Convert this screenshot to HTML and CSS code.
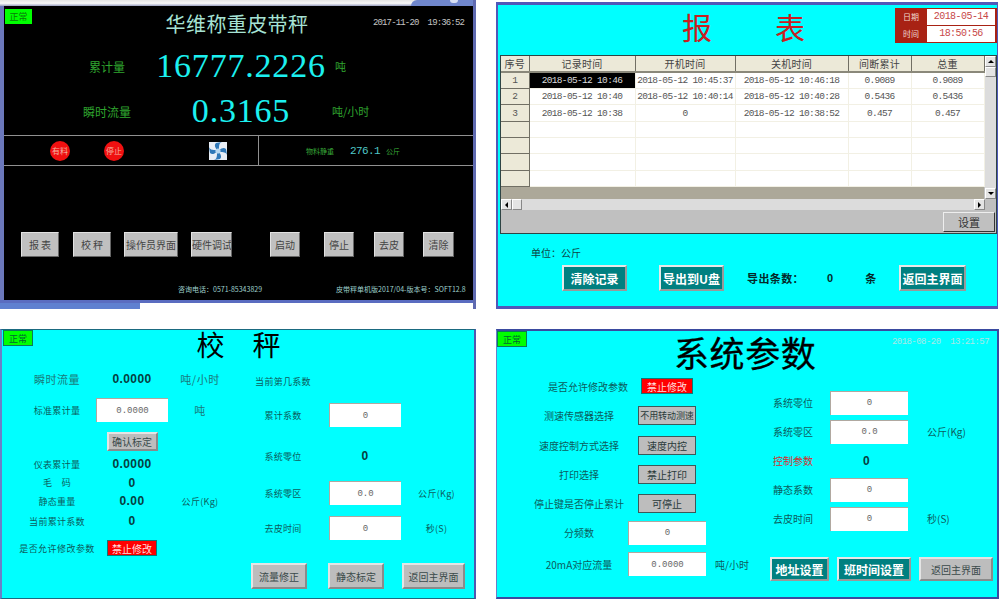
FILE: index.html
```html
<!DOCTYPE html>
<html lang="zh-CN">
<head>
<meta charset="utf-8">
<title>华维称重皮带秤</title>
<link rel="stylesheet" href="styles.css">
</head>
<body>
<main class="sheet">

  <!-- Main operating screen -->
  <section class="cell">
    <div class="win-main">
      <div class="chrome-top"><span class="chrome-corner"><i class="chrome-close"></i></span></div>
      <div class="screen-black">
        <header class="main-head">
          <span class="badge">正常</span>
          <h1 class="main-title">华维称重皮带秤</h1>
          <span class="main-clock">2017-11-20&nbsp; 19:36:52</span>
        </header>
        <div class="metrics">
          <span class="metric-label">累计量</span><span class="metric-value">16777.2226</span><span class="metric-unit unit-ton">吨</span>
          <span class="metric-label">瞬时流量</span><span class="metric-value">0.3165</span><span class="metric-unit">吨/小时</span>
        </div>
        <div class="status-strip">
          <div class="status-left">
            <span class="lamp">有料</span>
            <span class="lamp lamp-second">停止</span>
            <svg class="fan" viewBox="0 0 18 18" aria-hidden="true">
              <rect width="18" height="18" fill="#e8eef6"/>
              <path d="M8 8C6 5 5 3 7 1l6-1c-3 1-3 4-3 7z" fill="#2f78b8"/>
              <path d="M10 8c3-2 5-3 7-1l1 6c-1-3-4-3-7-3z" fill="#2f78b8"/>
              <path d="M10 10c2 3 3 5 1 7l-6 1c3-1 3-4 3-7z" fill="#2f78b8"/>
              <path d="M8 10c-3 2-5 3-7 1L0 5c1 3 4 3 7 3z" fill="#2f78b8"/>
              <circle cx="9" cy="9" r="2.6" fill="#b8d8f0"/>
            </svg>
          </div>
          <div class="status-right">
            <span class="tiny-green">物料静重</span>
            <span class="static-weight">276.1</span>
            <span class="tiny-green">公斤</span>
          </div>
        </div>
        <nav class="main-buttons">
          <button class="btn btn-main w38">报 表</button>
          <button class="btn btn-main w38 ml14">校 秤</button>
          <button class="btn btn-main w54 ml13">操作员界面</button>
          <button class="btn btn-main w41 ml13">硬件调试</button>
          <button class="btn btn-main w30 ml38">启动</button>
          <button class="btn btn-main w30 ml24">停止</button>
          <button class="btn btn-main w30 ml20">去皮</button>
          <button class="btn btn-main w31 ml19">清除</button>
        </nav>
        <footer class="main-foot">
          <span class="foot-phone">咨询电话：0571-85343829</span>
          <span class="foot-version">皮带秤单机版2017/04-版本号：SOFT12.8</span>
        </footer>
      </div>
      <div class="chrome-bottom"><span class="chrome-tab"></span></div>
    </div>
  </section>

  <!-- Report screen -->
  <section class="cell">
    <div class="screen report">
      <header class="report-head">
        <h1 class="report-title"><span>报</span><span>表</span></h1>
        <div class="clock-box">
          <span class="clock-label">日期</span><span class="clock-value">2018-05-14</span>
          <span class="clock-label">时间</span><span class="clock-value">18:50:56</span>
        </div>
      </header>
      <div class="grid-frame">
        <div class="grid-top">
          <div class="grid-main">
            <table class="records">
              <colgroup>
                <col class="col-no"><col class="col-rec"><col class="col-on"><col class="col-off"><col class="col-sub"><col class="col-total">
              </colgroup>
              <thead>
                <tr><th>序号</th><th>记录时间</th><th>开机时间</th><th>关机时间</th><th>间断累计</th><th>总重</th></tr>
              </thead>
              <tbody>
                <tr><th>1</th><td class="selected">2018-05-12 10:46</td><td>2018-05-12 10:45:37</td><td>2018-05-12 10:46:18</td><td>0.9089</td><td>0.9089</td></tr>
                <tr><th>2</th><td>2018-05-12 10:40</td><td>2018-05-12 10:40:14</td><td>2018-05-12 10:40:28</td><td>0.5436</td><td>0.5436</td></tr>
                <tr><th>3</th><td>2018-05-12 10:38</td><td>0</td><td>2018-05-12 10:38:52</td><td>0.457</td><td>0.457</td></tr>
                <tr><th></th><td></td><td></td><td></td><td></td><td></td></tr>
                <tr><th></th><td></td><td></td><td></td><td></td><td></td></tr>
                <tr><th></th><td></td><td></td><td></td><td></td><td></td></tr>
                <tr><th></th><td></td><td></td><td></td><td></td><td></td></tr>
              </tbody>
            </table>
            <div class="grid-empty"></div>
          </div>
          <div class="vscroll">
            <span class="sb-btn"><i class="tri tri-up"></i></span>
            <span class="sb-thumb"></span>
            <span class="sb-fill"></span>
            <span class="sb-btn"><i class="tri tri-down"></i></span>
          </div>
        </div>
        <div class="hscroll">
          <span class="sb-btn-h"><i class="tri tri-left"></i></span>
          <span class="sb-thumb-h"></span>
          <span class="sb-fill"></span>
          <span class="sb-btn-h"><i class="tri tri-right"></i></span>
        </div>
        <div class="grid-actions"><button class="btn btn-set">设置</button></div>
      </div>
      <p class="report-unit">单位：公斤</p>
      <div class="report-actions">
        <button class="btn btn-teal w65">清除记录</button>
        <button class="btn btn-teal w65 ml32">导出到U盘</button>
        <span class="export-label">导出条数：</span>
        <span class="export-count">0</span>
        <span class="export-unit">条</span>
        <button class="btn btn-teal w67 ml22">返回主界面</button>
      </div>
    </div>
  </section>

  <!-- Calibration screen -->
  <section class="cell cell-low">
    <div class="screen calib">
      <header class="calib-head">
        <span class="badge badge-light">正常</span>
        <h1 class="calib-title"><span>校</span><span>秤</span></h1>
      </header>
      <div class="calib-body">
        <div class="form calib-left">
          <span class="lbl lbl-lg">瞬时流量</span><b class="val">0.0000</b><span class="unit unit-lg">吨/小时</span>
          <span class="lbl">标准累计量</span><span class="input">0.0000</span><span class="unit unit-lg">吨</span>
          <span></span><button class="btn btn-form btn-short w51">确认标定</button><span></span>
          <span class="lbl">仪表累计量</span><b class="val">0.0000</b><span></span>
          <span class="lbl">毛　码</span><b class="val">0</b><span></span>
          <span class="lbl">静态重量</span><b class="val">0.00</b><span class="unit">公斤(Kg)</span>
          <span class="lbl">当前累计系数</span><b class="val">0</b><span></span>
          <span class="lbl lbl-wide">是否允许修改参数</span><span class="alarm w50">禁止修改</span><span></span>
        </div>
        <div class="calib-side">
          <div class="form calib-right">
            <span class="lbl">当前第几系数</span><span></span><span></span>
            <span class="lbl">累计系数</span><span class="input">0</span><span></span>
            <span class="lbl">系统零位</span><b class="val">0</b><span></span>
            <span class="lbl">系统零区</span><span class="input">0.0</span><span class="unit">公斤(Kg)</span>
            <span class="lbl">去皮时间</span><span class="input">0</span><span class="unit">秒(S)</span>
          </div>
          <div class="calib-buttons">
            <button class="btn btn-form w56">流量修正</button>
            <button class="btn btn-form w56 ml21">静态标定</button>
            <button class="btn btn-form w63 ml18">返回主界面</button>
          </div>
        </div>
      </div>
    </div>
  </section>

  <!-- System parameter screen -->
  <section class="cell cell-low">
    <div class="screen params">
      <header class="params-head">
        <span class="badge badge-light">正常</span>
        <h1 class="params-title">系统参数</h1>
        <span class="params-clock">2018-08-20&nbsp; 13:21:57</span>
      </header>
      <div class="params-body">
        <div class="form params-left">
          <span class="lbl lbl-p lbl-shift">是否允许修改参数</span><span class="alarm w52">禁止修改</span><span></span>
          <span class="lbl lbl-p">测速传感器选择</span><span class="toggle toggle-small">不用转动测速</span><span></span>
          <span class="lbl lbl-p">速度控制方式选择</span><span class="toggle">速度内控</span><span></span>
          <span class="lbl lbl-p">打印选择</span><span class="toggle">禁止打印</span><span></span>
          <span class="lbl lbl-p">停止键是否停止累计</span><span class="toggle">可停止</span><span></span>
          <span class="lbl lbl-p">分频数</span><span class="input input-wide">0</span><span></span>
          <span class="lbl lbl-p">20mA对应流量</span><span class="input input-wide">0.0000</span><span class="unit lbl-p">吨/小时</span>
        </div>
        <div class="params-side">
          <div class="form params-right">
            <span class="lbl lbl-p">系统零位</span><span class="input input-wide">0</span><span></span>
            <span class="lbl lbl-p">系统零区</span><span class="input input-wide">0.0</span><span class="unit unit-start lbl-p">公斤(Kg)</span>
            <span class="lbl lbl-p lbl-red">控制参数</span><b class="val val-left">0</b><span></span>
            <span class="lbl lbl-p">静态系数</span><span class="input input-wide">0</span><span></span>
            <span class="lbl lbl-p">去皮时间</span><span class="input input-wide">0</span><span class="unit unit-start lbl-p">秒(S)</span>
          </div>
          <div class="params-buttons">
            <button class="btn btn-teal btn-low w59">地址设置</button>
            <button class="btn btn-teal btn-low w74 ml8">班时间设置</button>
            <button class="btn btn-form btn-low w74 ml8">返回主界面</button>
          </div>
        </div>
      </div>
    </div>
  </section>

</main>
</body>
</html>
```
FILE: styles.css
```css
* { box-sizing: border-box; }

html, body { margin: 0; height: 100%; background: #fff; overflow: hidden; }

body {
  font-family: "Noto Sans CJK SC", "Liberation Sans", sans-serif;
  color: #0c5c5c;
}

h1, p { margin: 0; font-weight: 400; }

.sheet {
  display: grid;
  grid-template-columns: 496px 504px;
  grid-template-rows: 329px 271px;
  width: 1000px;
  height: 600px;
}

.cell { min-width: 0; }

/* Shared widgets */
.badge {
  display: flex;
  align-items: center;
  justify-content: center;
  width: 27px;
  height: 15px;
  background: #0f0;
  color: #0a5a0a;
  font-size: 9px;
}
.badge-light { width: 30px; height: 16px; border: 1px solid #0a7a5a; color: #063; }

.btn {
  display: block;
  padding: 0;
  font-family: inherit;
  white-space: nowrap;
  overflow: hidden;
  cursor: default;
}
.btn-main {
  height: 25px;
  background: #c0c0c0;
  border: 1px solid;
  border-color: #e2e2e2 #666 #666 #e2e2e2;
  color: #444;
  font-size: 10px;
}
.btn-form {
  height: 26px;
  background: #bdbdbd;
  border: 2px solid;
  border-color: #e4e4e4 #8a8a8a #8a8a8a #e4e4e4;
  color: #3a4a4a;
  font-size: 10px;
}
.btn-short { height: 19px; }
.btn-teal {
  height: 26px;
  background: #008080;
  border: 2px solid;
  border-color: #e8e8e8 #999 #999 #e8e8e8;
  color: #fff;
  font-size: 12px;
  font-weight: 700;
}
.btn-low { height: 24px; }
.btn-set {
  width: 52px;
  height: 20px;
  background: #c0c0c0;
  border: 1px solid;
  border-color: #eee #333 #333 #eee;
  color: #333;
  font-size: 11px;
}

.w30 { width: 30px; } .w31 { width: 31px; } .w38 { width: 38px; } .w41 { width: 41px; }
.w50 { width: 50px; } .w51 { width: 51px; } .w52 { width: 52px; } .w54 { width: 54px; }
.w56 { width: 56px; } .w59 { width: 59px; } .w63 { width: 63px; } .w65 { width: 65px; }
.w67 { width: 67px; } .w74 { width: 74px; }
.ml8 { margin-left: 8px; } .ml13 { margin-left: 13px; } .ml14 { margin-left: 14px; }
.ml18 { margin-left: 18px; } .ml19 { margin-left: 19px; } .ml20 { margin-left: 20px; }
.ml21 { margin-left: 21px; } .ml22 { margin-left: 22px; } .ml24 { margin-left: 24px; }
.ml32 { margin-left: 32px; } .ml38 { margin-left: 38px; }

/* Field grids: label, value, unit */
.form { display: grid; align-items: center; justify-items: center; }
.lbl, .unit { white-space: nowrap; font-size: 9px; letter-spacing: .3px; }
.lbl-lg, .unit-lg { font-size: 11px; letter-spacing: .5px; }
.lbl-wide { font-size: 9px; letter-spacing: .45px; }
.lbl-p { font-size: 10px; letter-spacing: 0; }
.lbl-red { color: #d03030; }
.lbl-shift { margin-left: 18px; }
.unit-start { justify-self: start; padding-left: 11px; }

.val {
  font-family: "Liberation Sans", sans-serif;
  font-size: 12px;
  letter-spacing: .4px;
  color: #064040;
}

.input {
  display: flex;
  align-items: center;
  justify-content: center;
  width: 72px;
  height: 24px;
  background: #fff;
  border-top: 1px solid #b0a8a0;
  border-left: 1px solid #b0a8a0;
  color: #666;
  font-family: "Liberation Mono", monospace;
  font-size: 9px;
}
.input-wide { width: 78px; }

.alarm {
  display: flex;
  align-items: center;
  justify-content: center;
  height: 16px;
  background: #f00;
  border: 1px solid #0a7a7a;
  color: #fdd;
  font-size: 10px;
}

.toggle {
  display: flex;
  align-items: center;
  justify-content: center;
  width: 58px;
  height: 19px;
  background: #bdbdbd;
  border: 1px solid #3a5a5a;
  color: #2a3a3a;
  font-size: 10px;
  white-space: nowrap;
}
.toggle-small { font-size: 9px; letter-spacing: -.1px; }

/* Main screen */
.win-main {
  display: flex;
  flex-direction: column;
  width: 476px;
  height: 309px;
  border-right: 3px solid #5f6ab0;
  background: #fff;
}
.chrome-top {
  display: flex;
  justify-content: flex-end;
  height: 6px;
  background: linear-gradient(#e4e4e4, #f8f8f8 55%, #9aa0c0);
}
.chrome-corner {
  display: flex;
  justify-content: flex-end;
  width: 62px;
  height: 6px;
  padding-right: 15px;
  background: #6f86cc;
  border-bottom-left-radius: 0;
  border-top-left-radius: 14px;
}
.chrome-close { width: 8px; height: 3px; background: #d8e0f4; border-radius: 0 0 4px 4px; }
.screen-black {
  display: flex;
  flex-direction: column;
  height: 294px;
  border-left: 4px solid #6b78bc;
  background: #000;
}
.chrome-bottom { height: 9px; border-top: 3px solid #5a6cc0; background: #fff; }
.chrome-tab { display: block; width: 140px; height: 6px; background: #5f80d0; }

.main-head {
  display: grid;
  grid-template-columns: 1fr auto 1fr;
  align-items: center;
  height: 39px;
  padding: 0 9px 0 1px;
}
.main-head .badge { align-self: start; margin-top: 3px; color: #0a7a0a; }
.main-title {
  margin: 0 0 4px 5px;
  font-size: 20px;
  letter-spacing: .4px;
  line-height: 30px;
  color: #a6e2d4;
}
.main-clock {
  justify-self: end;
  margin-bottom: 6px;
  font-family: "Liberation Mono", monospace;
  font-size: 9px;
  letter-spacing: -.85px;
  color: #c4c4c4;
}

.metrics {
  display: grid;
  grid-template-columns: 86px 182px 1fr;
  grid-template-rows: 42px 48px;
  align-items: center;
  padding-left: 60px;
}
.metric-label { justify-self: center; color: #2fa52f; font-size: 12px; white-space: nowrap; }
.metric-value {
  justify-self: center;
  font-family: "Liberation Serif", serif;
  font-size: 34px;
  letter-spacing: .8px;
  line-height: 1;
  color: #1cf0f0;
}
.metric-unit { color: #2fa52f; font-size: 11px; }
.unit-ton { padding-left: 3px; }

.status-strip {
  display: flex;
  height: 31px;
  border-top: 1px solid #909090;
  border-bottom: 1px solid #909090;
}
.status-left {
  display: flex;
  align-items: center;
  width: 255px;
  padding-left: 46px;
  border-right: 1px solid #909090;
}
.lamp {
  display: flex;
  align-items: center;
  justify-content: center;
  width: 20px;
  height: 20px;
  border-radius: 50%;
  background: #f01010;
  color: #f5b0a0;
  font-size: 8px;
  white-space: nowrap;
}
.lamp-second { margin-left: 34px; }
.fan { width: 18px; height: 18px; margin-left: 85px; }
.status-right {
  display: flex;
  align-items: center;
  padding-left: 47px;
}
.tiny-green { color: #38a838; font-size: 7px; white-space: nowrap; }
.static-weight {
  margin: 0 6px 0 16px;
  font-family: "Liberation Mono", monospace;
  font-size: 11px;
  letter-spacing: -.6px;
  color: #50c8c8;
}

.main-buttons { display: flex; margin-top: 66px; padding-left: 17px; }
.main-foot {
  display: flex;
  margin-top: 26px;
  padding-left: 174px;
  color: #9fd0cc;
  font-size: 7px;
  line-height: 12px;
  white-space: nowrap;
}
.foot-version { margin-left: 74px; }

/* Screens on a cyan ground */
.screen { background: #0ff; }

/* Report screen */
.report {
  display: flex;
  flex-direction: column;
  width: 502px;
  height: 307px;
  margin-top: 2px;
  border: solid #5058b8;
  border-width: 3px 1px 3px 2px;
}
.report-head {
  display: flex;
  height: 50px;
  padding: 3px 0 0 0;
}
.report-title {
  display: flex;
  justify-content: space-between;
  width: 123px;
  margin-left: 184px;
  font-size: 30px;
  line-height: 36px;
  color: #c82020;
}
.clock-box {
  display: grid;
  grid-template-columns: 32px 68px;
  grid-auto-rows: 17px;
  align-items: center;
  justify-items: center;
  width: 102px;
  height: 35px;
  margin-left: auto;
  background: #a82214;
}
.clock-label { color: #f0d8d0; font-size: 8px; }
.clock-value {
  display: flex;
  align-items: center;
  justify-content: center;
  width: 68px;
  height: 16px;
  background: #fff;
  color: #c84848;
  font-family: "Liberation Mono", monospace;
  font-size: 10px;
  letter-spacing: -.55px;
}

.grid-frame {
  width: 497px;
  height: 179px;
  margin-left: 2px;
  border: 1px solid #2e4444;
  background: #c0c0c0;
}
.grid-top { display: flex; height: 143px; }
.grid-main { display: flex; flex-direction: column; width: 483px; background: #aca899; }
.grid-empty { flex: 1; }

.records {
  width: 483px;
  table-layout: fixed;
  border-collapse: collapse;
  background: #fff;
  font-family: "Liberation Mono", monospace;
  font-size: 9.5px;
  letter-spacing: -.67px;
  color: #555;
  text-align: center;
}
.col-no { width: 28px; } .col-rec { width: 106px; } .col-on { width: 100px; }
.col-off { width: 113px; } .col-sub { width: 63px; } .col-total { width: 73px; }
.records tr { height: 16.3px; }
.records th {
  padding: 0;
  background: #ece9d8;
  border-right: 1px solid #716f64;
  border-bottom: 1px solid #716f64;
  font-weight: 400;
}
.records thead th {
  font-family: "Noto Sans CJK SC", sans-serif;
  font-size: 10px;
  letter-spacing: .3px;
  color: #444;
  border-bottom: 2px solid #8a887a;
}
.records td {
  padding: 0;
  border-right: 1px solid #f2f0e4;
  border-bottom: 1px solid #f2f0e4;
  white-space: nowrap;
}
.records .selected { background: #000; color: #ddd; }

.vscroll {
  display: flex;
  flex-direction: column;
  width: 13px;
  margin-left: 1px;
  background: #dcdcdc;
}
.hscroll { display: flex; height: 11px; width: 484px; background: #dcdcdc; }
.sb-btn, .sb-btn-h, .sb-thumb, .sb-thumb-h {
  display: flex;
  align-items: center;
  justify-content: center;
  flex: none;
  background: #e4e4e4;
  border: 1px solid;
  border-color: #fff #888 #888 #fff;
}
.sb-btn { height: 11px; }
.sb-btn-h { width: 11px; }
.sb-thumb { height: 10px; }
.sb-thumb-h { width: 10px; }
.sb-fill { flex: 1; }
.tri { width: 0; height: 0; border: 3px solid transparent; }
.tri-up { border-bottom-color: #000; border-top-width: 0; }
.tri-down { border-top-color: #000; border-bottom-width: 0; }
.tri-left { border-right-color: #000; border-left-width: 0; }
.tri-right { border-left-color: #000; border-right-width: 0; }
.grid-actions { display: flex; justify-content: flex-end; padding: 2px 1px 0 0; }

.report-unit {
  margin: 11px 0 0 33px;
  height: 16px;
  font-size: 10px;
  line-height: 16px;
  color: #0c4444;
}
.report-actions {
  display: flex;
  align-items: center;
  margin: 4px 0 0 64px;
  color: #042a2a;
}
.report-actions .w67 { margin-left: 23px; }
.export-label { margin-left: 23px; font-size: 11px; font-weight: 700; letter-spacing: .4px; white-space: nowrap; }
.export-count { margin-left: 23px; font-family: "Liberation Sans", sans-serif; font-size: 11px; font-weight: 700; }
.export-unit { margin-left: 32px; font-size: 11px; font-weight: 700; }

/* Calibration screen */
.calib {
  width: 476px;
  height: 270px;
  border: solid #1a6a80;
  border-width: 1px 2px 1px 2px;
  border-left-color: #6a80c8;
  border-right-color: #5058b0;
}
.calib-head {
  display: grid;
  grid-template-columns: 1fr auto 1fr;
  height: 37px;
  padding-left: 1px;
}
.calib-title {
  display: flex;
  justify-content: space-between;
  width: 84px;
  font-size: 28px;
  line-height: 28px;
  color: #000;
}
.calib-body { display: flex; }
.calib-left {
  flex: none;
  width: 230px;
  margin-left: 16px;
  grid-template-columns: 78px 72px 64px;
  grid-template-rows: 24px 38px 25px 20px 17px 20px 20px 34px;
  align-self: start;
}
.calib-left .unit-lg, .calib-left .lbl-lg { color: #1a7a7a; }
.calib-side { margin-left: -3px; }
.calib-right {
  grid-template-columns: 76px 72px 55px;
  grid-template-rows: 28px 40px 42px 32px 38px;
  column-gap: 8px;
}
.calib-buttons { display: flex; margin: 16px 0 0 6px; }

/* Parameter screen */
.params {
  width: 503px;
  height: 270px;
  border: solid #3a4aa0;
  border-width: 2px 2px 2px 1px;
  border-left-color: #6a80c8;
}
.params-head {
  display: grid;
  grid-template-columns: 177px auto 1fr;
  height: 41px;
}
.params-title {
  font-size: 35px;
  letter-spacing: .6px;
  line-height: 42px;
  color: #000;
  -webkit-text-stroke: .3px #000;
}
.params-clock {
  justify-self: end;
  margin: 6px 8px 0 0;
  font-family: "Liberation Mono", monospace;
  font-size: 9px;
  letter-spacing: -.55px;
  color: #a8e8e8;
}
.params-body { display: flex; }
.params-left {
  flex: none;
  width: 242px;
  margin-left: 26px;
  grid-template-columns: 112px 64px 66px;
  grid-template-rows: 28px 31px 29px 29px 29px 29px 34px;
  align-self: start;
}
.params-side { margin-left: -1px; }
.params-right {
  grid-template-columns: 58px 94px 62px;
  grid-template-rows: repeat(5, 29px);
  margin-top: 16px;
}
.params-buttons { display: flex; margin: 24px 0 0 6px; }
.val-left { margin-right: 5px; }
```
